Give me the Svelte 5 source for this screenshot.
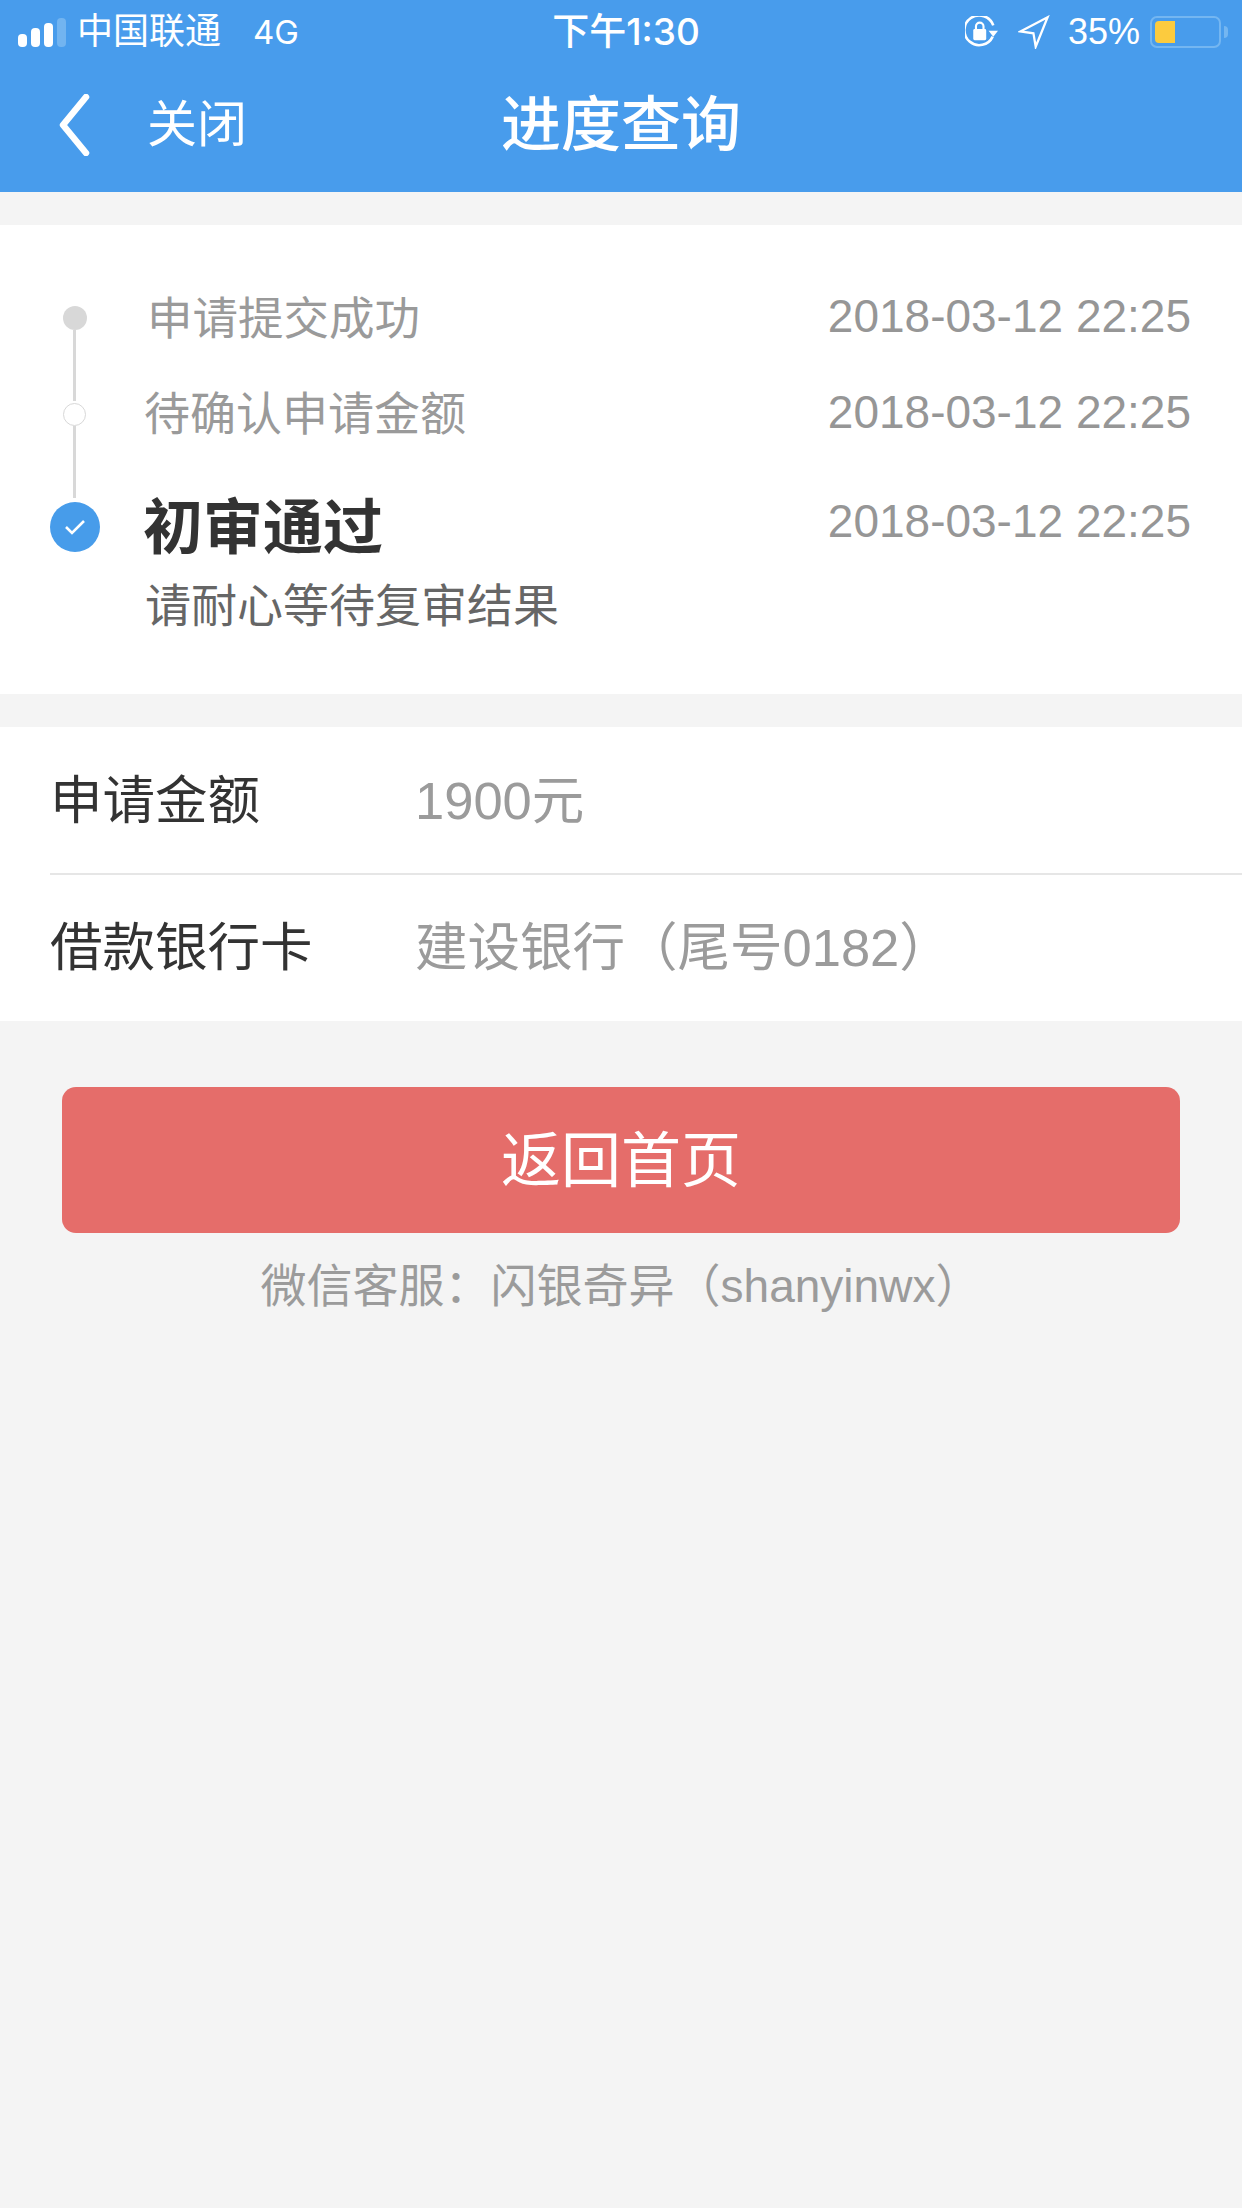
<script>
  const steps = [
    { id: 'a', title: '申请提交成功', time: '2018-03-12 22:25' },
    { id: 'b', title: '待确认申请金额', time: '2018-03-12 22:25' }
  ];
</script>

<div class="page">
  <header class="top">
    <div class="status">
      <div class="left">
        <span class="signal"><i class="b1"></i><i class="b2"></i><i class="b3"></i><i class="b4"></i></span>
        <span class="carrier">中国联通</span>
        <span class="net">4G</span>
      </div>
      <div class="clock">下午1:30</div>
      <div class="right">
        <svg class="lock" width="33" height="33" viewBox="3 3 28 28" fill="none">
          <path d="M26.5 20.5A12.6 12.6 0 1 1 27 11" stroke="#fff" stroke-width="2.2"/>
          <path d="M23 15.5h8l-4 5z" fill="#fff"/>
          <rect x="10" y="14" width="11" height="9.5" rx="1.2" fill="#fff"/>
          <path d="M12.3 14.5v-2.7a3.2 3.2 0 0 1 6.4 0v2.7" stroke="#fff" stroke-width="1.8"/>
        </svg>
        <svg class="loc" width="32" height="34" viewBox="0 0 28 30" fill="none">
          <path d="M2 14.5 26 2 15.5 28 13.5 16.2z" stroke="#fff" stroke-width="2" stroke-linejoin="miter"/>
        </svg>
        <span class="pct">35%</span>
        <span class="batt"><span class="fill"></span></span>
        <span class="nub"></span>
      </div>
    </div>
    <div class="nav">
      <svg class="back" width="34" height="62" viewBox="0 0 34 62" fill="none">
        <path d="M28 3 5 31l23 28" stroke="#fff" stroke-width="6.5" stroke-linecap="round" stroke-linejoin="round"/>
      </svg>
      <span class="close">关闭</span>
      <h1>进度查询</h1>
    </div>
  </header>

  <section class="card timeline">
    {#each steps as s, i}
      <div class="step {s.id}">
        <div class="rail">
          <span class="dot"></span>
          <span class="line"></span>
        </div>
        <div class="title">{s.title}</div>
        <div class="time">{s.time}</div>
      </div>
    {/each}
    <div class="step c">
      <div class="rail">
        <span class="dot">
          <svg width="22" height="18" viewBox="0 0 22 18" fill="none"><path d="M2 9l6 6L20 3" stroke="#fff" stroke-width="2.6"/></svg>
        </span>
      </div>
      <div class="main">
        <div class="title">初审通过</div>
        <div class="sub">请耐心等待复审结果</div>
      </div>
      <div class="time">2018-03-12 22:25</div>
    </div>
  </section>

  <section class="card info">
    <div class="row first"><span class="k">申请金额</span><span class="v">1900元</span></div>
    <div class="row"><span class="k">借款银行卡</span><span class="v">建设银行（尾号0182）</span></div>
  </section>

  <button class="home">返回首页</button>
  <p class="wx">微信客服：闪银奇异（shanyinwx）</p>
</div>

<style>
  :global(body) { margin: 0; background: #f4f4f4; }
  .page {
    width: 1242px; height: 2208px; background: #f4f4f4; overflow: hidden;
    font-family: "Liberation Sans", "Noto Sans CJK SC", sans-serif;
    display: flex; flex-direction: column;
  }
  .top { height: 192px; background: #489cec; color: #fff; flex: none; }
  .status { height: 64px; display: grid; grid-template-columns: 1fr auto 1fr; align-items: center; }
  .left { display: flex; align-items: center; padding-left: 18px; }
  .signal { display: flex; align-items: flex-end; gap: 4px; height: 29px; margin-right: 11px; }
  .signal i { width: 9px; background: #fff; border-radius: 4px; display: block; }
  .b1 { height: 13px; } .b2 { height: 19px; } .b3 { height: 24px; }
  .signal .b4 { height: 29px; background: #72b4f0; }
  .carrier { font-size: 36px; line-height: 64px; }
  .net { font-family: Inter, "Liberation Sans", sans-serif; font-size: 33px; margin-left: 32px; line-height: 64px; }
  .clock { font-family: Inter, "Noto Sans CJK SC", sans-serif; font-size: 37px; line-height: 64px; font-weight: 500; padding-left: 10px; }
  .right { display: flex; align-items: center; justify-content: flex-end; padding-right: 14px; }
  .lock { margin-right: 20px; }
  .loc { margin-right: 18px; }
  .pct { font-size: 36px; line-height: 64px; margin-right: 10px; }
  .batt { width: 71px; height: 32px; box-sizing: border-box; border: 2.5px solid #74b6f1; border-radius: 7px; padding: 3px; display: block; }
  .fill { display: block; width: 20px; height: 100%; background: #fccb3e; border-radius: 4px 0 0 4px; }
  .nub { width: 4px; height: 12px; background: #74b6f1; border-radius: 0 4px 4px 0; margin-left: 3px; }
  .nav { height: 128px; position: relative; display: flex; align-items: center; justify-content: center; }
  .back { position: absolute; left: 58px; top: 30px; }
  .close { position: absolute; left: 147px; top: 29px; font-size: 50px; line-height: 64px; }
  h1 { margin: 0; font-size: 60px; font-weight: 500; line-height: 128px; margin-top: -4px; }

  .card { background: #fff; }
  .timeline { margin-top: 33px; height: 469px; box-sizing: border-box; padding-top: 61px; position: relative; }
  .step { display: flex; position: relative; padding-right: 51px; }
  .rail { width: 144px; flex: none; position: relative; }
  .step .title { flex: 1; }
  .a, .b { height: 96px; }
  .a .title, .b .title { font-size: 46px; line-height: 64px; color: #9a9a9a; }
  .a .title { margin-left: 3px; margin-top: 2px; font-size: 45.5px; }
  .time { font-size: 46px; line-height: 64px; color: #969696; margin-top: -2px; }
  .dot { position: absolute; border-radius: 50%; box-sizing: border-box; }
  .a .dot { left: 63px; top: 20px; width: 24px; height: 24px; background: #d8d8d8; }
  .b .dot { left: 63px; top: 21px; width: 23px; height: 23px; background: #fff; border: 1.5px solid #d8d8d8; }
  .line { position: absolute; left: 73px; width: 3px; background: #d8d8d8; }
  .a .line { top: 44px; height: 71px; }
  .b .line { top: 44px; height: 72px; }
  .c { margin-top: 11px; }
  .c .dot { left: 50px; top: 13px; width: 50px; height: 50px; background: #479cea; display: flex; align-items: center; justify-content: center; }
  .main { flex: 1; }
  .main .title { font-size: 60px; line-height: 80px; font-weight: 700; color: #333; margin-left: -1px; }
  .sub { font-size: 46px; line-height: 64px; color: #666; margin-left: 1px; margin-top: 5px; }
  .c .time { margin-top: 0; }

  .info { margin-top: 33px; }
  .row { height: 146px; box-sizing: border-box; padding-bottom: 10px; display: flex; align-items: center; margin-left: 50px; font-size: 52.5px; }
  .row.first { height: 148px; padding-bottom: 8px; border-bottom: 2px solid #e6e6e6; }
  .k { width: 365px; color: #333; flex: none; }
  .v { color: #9b9b9b; }
  .home {
    margin: 66px 62px 0; height: 146px; border: none; border-radius: 14px; background: #e56d6a; color: #fff;
    font: inherit; font-size: 60px; padding: 0 0 9px; flex: none;
  }
  .wx { margin: 21px 0 0; text-align: center; font-size: 46px; line-height: 64px; color: #9b9b9b; }
</style>
